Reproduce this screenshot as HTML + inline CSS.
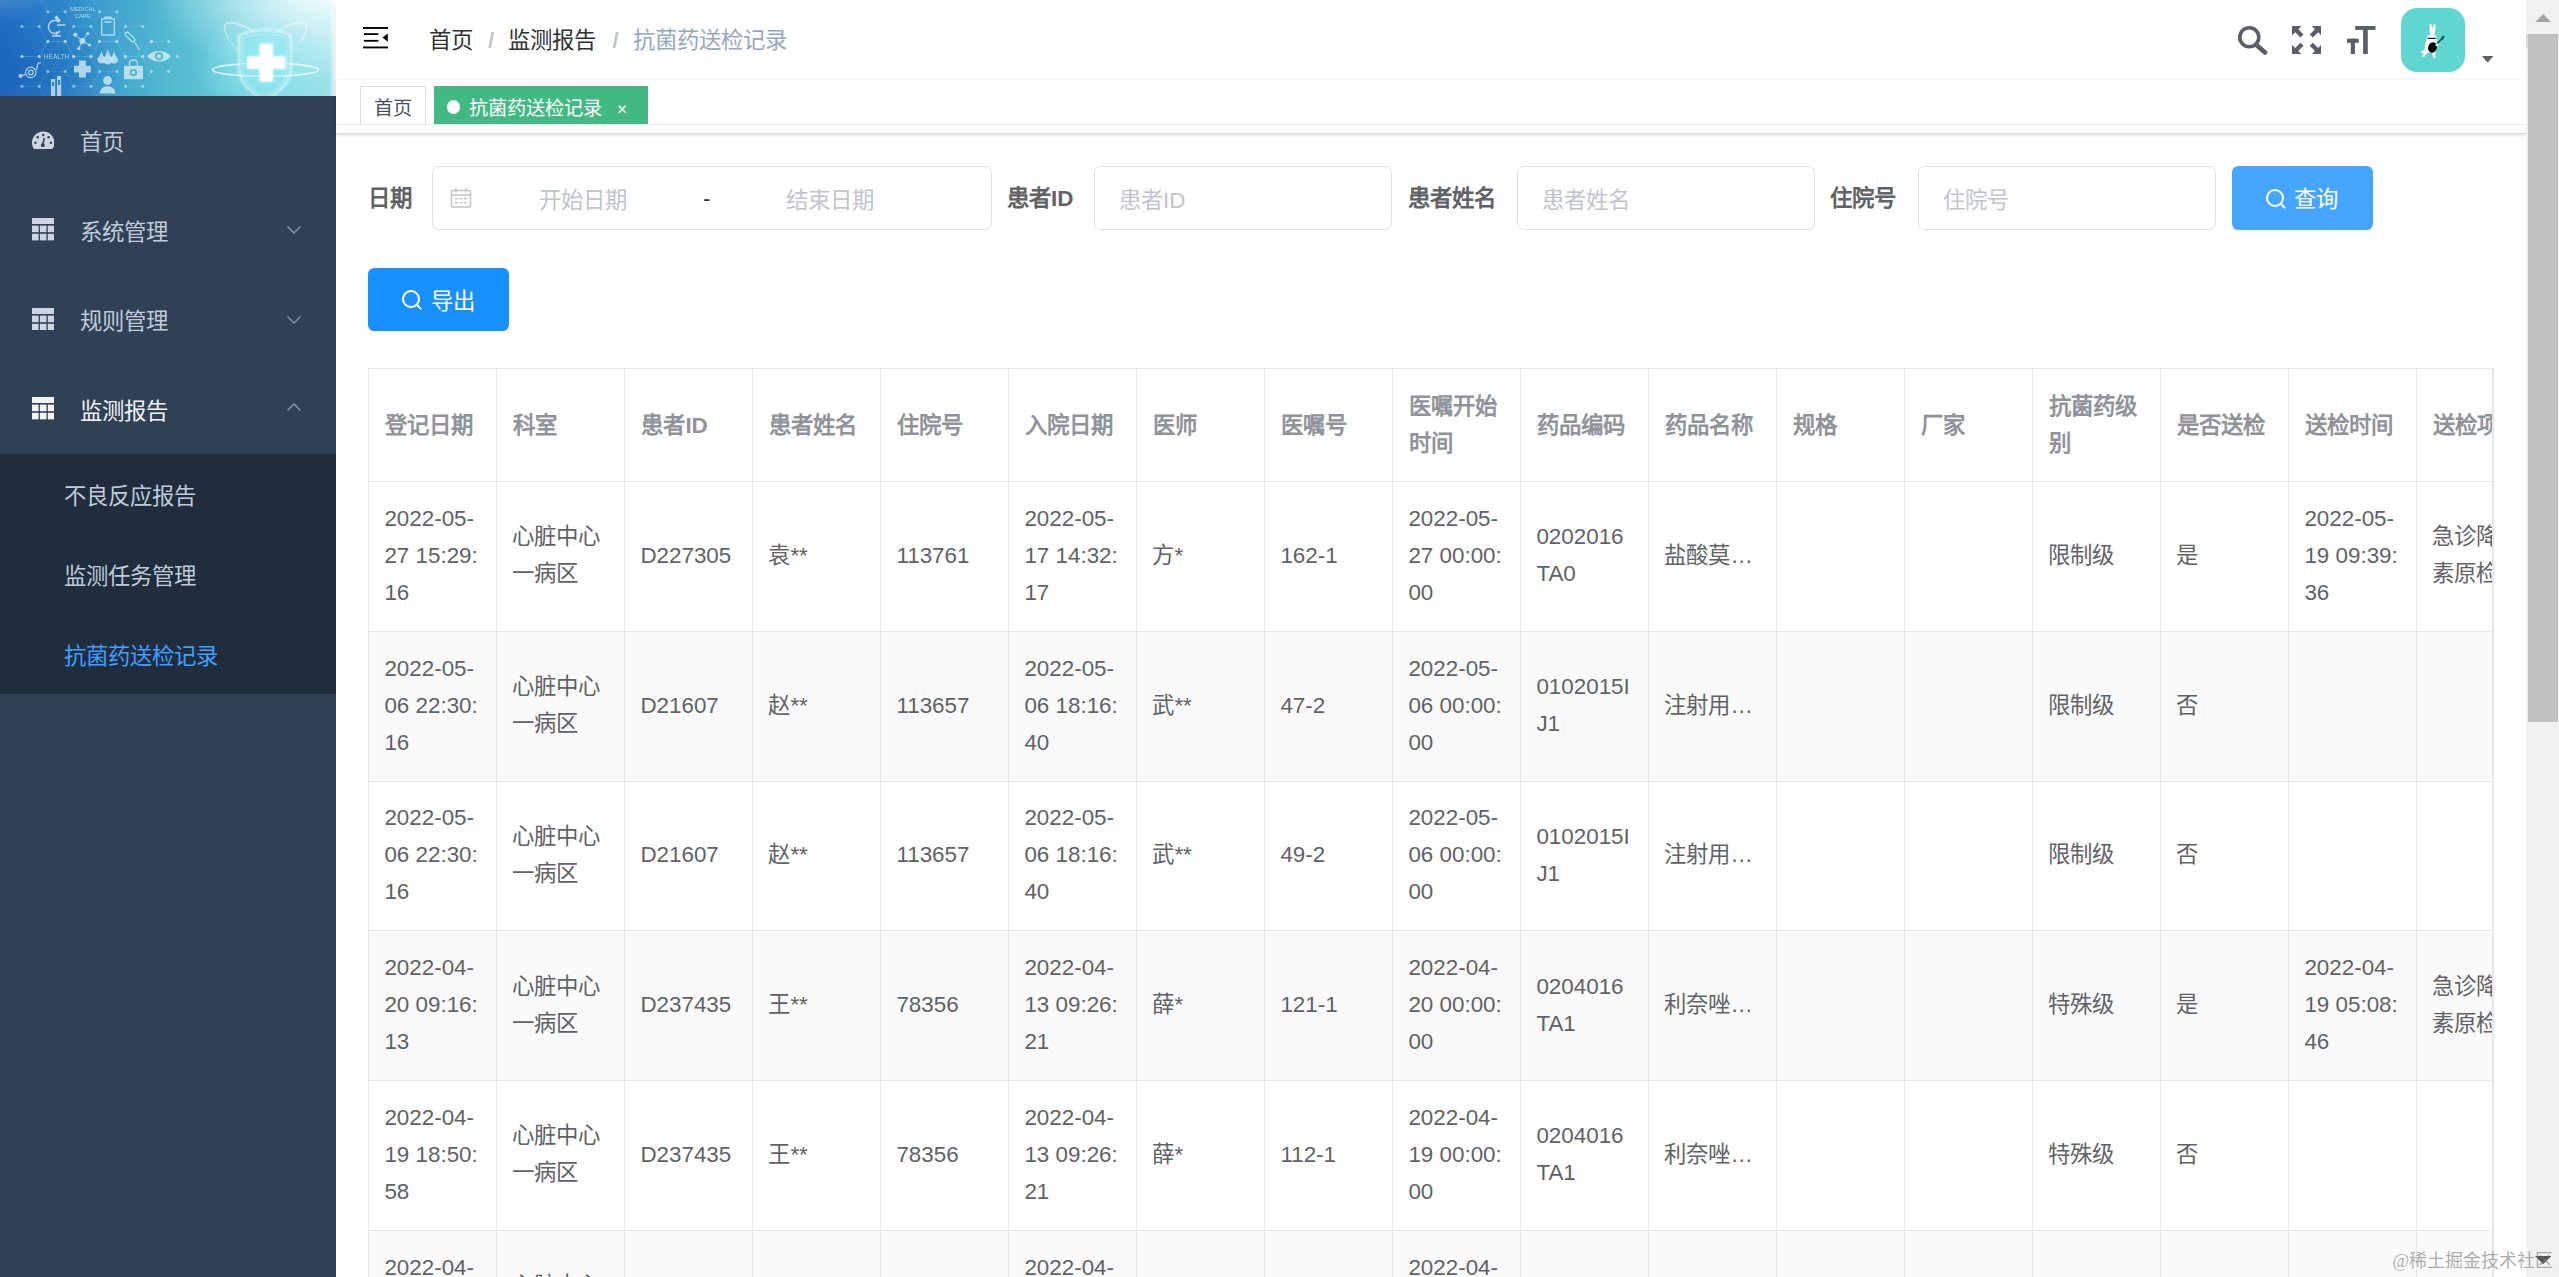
<!DOCTYPE html>
<html lang="zh-CN">
<head>
<meta charset="utf-8">
<title>抗菌药送检记录</title>
<style>
*{box-sizing:border-box;margin:0;padding:0}
html,body{width:2559px;height:1277px;overflow:hidden;background:#fff}
body{position:relative;font-family:"Liberation Sans",sans-serif;font-size:22.4px;color:#606266;-webkit-font-smoothing:antialiased}
.abs{position:absolute}

/* ---------- sidebar ---------- */
#sidebar{position:absolute;left:0;top:0;width:336px;height:1277px;background:#304156;overflow:hidden}
#logo{position:absolute;left:0;top:0;width:336px;height:96px;overflow:hidden;
 background:linear-gradient(90deg,#1e6cc2 0%,#2b86c9 18%,#3fa3cf 33%,#52b9d0 50%,#62c6d6 66%,#7dd5e0 82%,#9fe2ea 100%)}
.mi{position:absolute;left:0;width:336px;height:89.6px;line-height:89.6px;color:#bfcbd9;font-size:22.4px;white-space:nowrap}
.mi .txt{position:absolute;left:80px;top:2px}
.mi svg.ic{position:absolute;left:32px;top:32.700px;width:22.4px;height:22.4px}
.mi svg.ar{position:absolute;left:286px;top:39.600px;width:16px;height:10px}
#sub{position:absolute;left:0;top:454.4px;width:336px;height:240px;background:#1f2d3d}
.si{position:absolute;left:64px;margin-top:2.500px;height:80px;line-height:80px;color:#bfcbd9;font-size:22.4px;white-space:nowrap}

/* ---------- navbar ---------- */
#navbar{position:absolute;left:336px;top:0;width:2190px;height:80px;background:#fff;box-shadow:0 1.6px 6.4px rgba(0,21,41,.08)}
.bc{position:absolute;top:1px;height:80px;line-height:80px;font-size:22.4px;white-space:nowrap;color:#303133}
.bc.sep{color:#c0c4cc;font-weight:700}
.bc.last{color:#97a8be}

/* ---------- tags ---------- */
#tags{position:absolute;left:336px;top:80px;width:2190px;height:54.4px;background:#fff;border-bottom:1.6px solid #d9dadd;box-shadow:0 1.6px 4.8px 0 rgba(0,0,0,.12),0 0 4.8px 0 rgba(0,0,0,.04)}
.tag{position:absolute;top:6.4px;height:41.6px;line-height:38.4px;font-size:19.2px;border:1.6px solid #d8dce5;color:#495060;background:#fff;white-space:nowrap}
.tag.on{background:#42b983;border-color:#42b983;color:#fff}

/* ---------- form ---------- */
.lbl{position:absolute;top:167px;height:64px;line-height:64px;font-size:22.4px;font-weight:700;color:#606266;white-space:nowrap}
.inp{position:absolute;top:166.4px;height:64px;border:1.6px solid #dcdfe6;border-radius:6.4px;background:#fff;line-height:60.8px;font-size:22.4px;color:#c0c4cc;white-space:nowrap}
.inp span{position:absolute;top:3.900px}
.btn{position:absolute;height:64px;border-radius:6.4px;color:#fff;font-size:22.4px;line-height:64px;white-space:nowrap}

/* ---------- table ---------- */
#tw{position:absolute;left:368px;top:368px;width:2126px;height:920px;overflow:hidden;border-left:1.6px solid #e2e8ee;border-top:1.6px solid #e2e8ee}
#tw:after{content:"";position:absolute;right:0;top:0;width:1.6px;height:100%;background:#e2e8ee}
table{border-collapse:separate;border-spacing:0;table-layout:fixed;width:2304px}
th,td{width:128px;border-right:1.6px solid #e2e8ee;border-bottom:1.6px solid #e2e8ee;padding:0 0 0 15.4px;text-align:left;vertical-align:middle;font-size:22.4px;line-height:37px;white-space:nowrap;overflow:hidden}
th{height:113px;color:#909399;font-weight:700;background:#fff;padding-left:16.400px;padding-top:0}
td{height:149.750px;color:#606266;font-weight:400;background:#fff;padding-bottom:2.200px}
tr.s td{background:#fafafa}

/* ---------- scrollbar ---------- */
#sb{position:absolute;left:2526px;top:0;width:33px;height:1277px;background:#f1f1f1}
#sb .th{position:absolute;left:2px;top:34px;width:30px;height:687.700px;background:#c1c1c1}
</style>
</head>
<body>

<div id="sidebar">
  <div id="logo"><svg class="abs" style="left:0;top:0;width:336px;height:96px" viewBox="0 0 336 96">
<defs><radialGradient id="g1" cx="0" cy="0" r="1"><stop offset="0" stop-color="#fff" stop-opacity=".55"/><stop offset="1" stop-color="#fff" stop-opacity="0"/></radialGradient><radialGradient id="g2" cx=".5" cy=".5" r=".5"><stop offset="0" stop-color="#fff" stop-opacity=".95"/><stop offset=".45" stop-color="#e9fbfd" stop-opacity=".6"/><stop offset="1" stop-color="#dff8fb" stop-opacity="0"/></radialGradient><radialGradient id="g3" cx=".5" cy=".5" r=".5"><stop offset="0" stop-color="#9ff0f5" stop-opacity=".75"/><stop offset="1" stop-color="#9ff0f5" stop-opacity="0"/></radialGradient><radialGradient id="g4" cx=".5" cy=".5" r=".5"><stop offset="0" stop-color="#1a5fb6" stop-opacity=".6"/><stop offset=".6" stop-color="#1a5fb6" stop-opacity=".25"/><stop offset="1" stop-color="#1a5fb6" stop-opacity="0"/></radialGradient><linearGradient id="g6" gradientUnits="userSpaceOnUse" x1="0" y1="18" x2="0" y2="58"><stop offset="0" stop-color="#fff" stop-opacity=".75"/><stop offset=".55" stop-color="#fff" stop-opacity=".45"/><stop offset="1" stop-color="#fff" stop-opacity="0"/></linearGradient><linearGradient id="g5" x1="0" y1="0" x2="1" y2="0"><stop offset="0" stop-color="#fff" stop-opacity="0"/><stop offset="1" stop-color="#fff" stop-opacity=".9"/></linearGradient><filter id="bl" x="-20%" y="-20%" width="140%" height="140%"><feGaussianBlur stdDeviation="1.100"/></filter><filter id="bl3" x="-5%" y="-5%" width="110%" height="110%"><feGaussianBlur stdDeviation=".45"/></filter><filter id="bl4" x="-20%" y="-20%" width="140%" height="140%"><feGaussianBlur stdDeviation=".8"/></filter><filter id="bl2" x="-20%" y="-20%" width="140%" height="140%"><feGaussianBlur stdDeviation=".5"/></filter></defs>
<ellipse cx="0" cy="75" rx="130" ry="70" fill="url(#g4)"/>
<ellipse cx="0" cy="0" rx="75" ry="34" fill="url(#g1)"/>
<ellipse cx="326" cy="-10" rx="175" ry="92" fill="url(#g2)"/>
<ellipse cx="264" cy="66" rx="70" ry="52" fill="url(#g3)"/>
<g filter="url(#bl3)" opacity=".8">
<g stroke="#d8f0ff" stroke-opacity=".16" stroke-width=".8" fill="none">
<path d="M21.9 -3.2L39.2 -3.2"/>
<path d="M21.9 26.6L39.2 26.6"/>
<path d="M21.9 56.4L39.2 56.4"/>
<path d="M21.9 56.5L39.2 56.5"/>
<path d="M21.9 86.3L39.2 86.3"/>
<path d="M21.9 116.1L39.2 116.1"/>
<path d="M39.2 -3.2L47.8 11.7"/>
<path d="M39.2 26.6L47.8 11.7"/>
<path d="M39.2 26.6L47.8 41.5"/>
<path d="M39.2 56.4L47.8 41.5"/>
<path d="M39.2 56.5L47.8 41.6"/>
<path d="M39.2 56.5L47.8 71.4"/>
<path d="M39.2 86.3L47.8 71.4"/>
<path d="M39.2 86.3L47.8 101.2"/>
<path d="M39.2 116.1L47.8 101.2"/>
<path d="M47.8 11.7L65.1 11.7"/>
<path d="M47.8 41.5L65.1 41.5"/>
<path d="M47.8 41.6L65.1 41.6"/>
<path d="M47.8 71.4L65.1 71.4"/>
<path d="M47.8 101.2L65.1 101.2"/>
<path d="M65.1 11.7L73.7 -3.2"/>
<path d="M65.1 11.7L73.7 26.6"/>
<path d="M65.1 41.5L73.7 26.6"/>
<path d="M65.1 41.5L73.7 56.4"/>
<path d="M65.1 41.6L73.7 56.5"/>
<path d="M65.1 71.4L73.7 56.5"/>
<path d="M65.1 71.4L73.7 86.3"/>
<path d="M65.1 101.2L73.7 86.3"/>
<path d="M65.1 101.2L73.7 116.1"/>
<path d="M73.7 -3.2L91.0 -3.2"/>
<path d="M73.7 26.6L91.0 26.6"/>
<path d="M73.7 56.4L91.0 56.4"/>
<path d="M73.7 56.5L91.0 56.5"/>
<path d="M73.7 86.3L91.0 86.3"/>
<path d="M73.7 116.1L91.0 116.1"/>
<path d="M91.0 -3.2L99.6 11.7"/>
<path d="M91.0 26.6L99.6 11.7"/>
<path d="M91.0 26.6L99.6 41.5"/>
<path d="M91.0 56.4L99.6 41.5"/>
<path d="M91.0 56.5L99.6 41.6"/>
<path d="M91.0 56.5L99.6 71.4"/>
<path d="M91.0 86.3L99.6 71.4"/>
<path d="M91.0 86.3L99.6 101.2"/>
<path d="M91.0 116.1L99.6 101.2"/>
<path d="M99.6 11.7L116.9 11.7"/>
<path d="M99.6 41.5L116.9 41.5"/>
<path d="M99.6 41.6L116.9 41.6"/>
<path d="M99.6 71.4L116.9 71.4"/>
<path d="M99.6 101.2L116.9 101.2"/>
<path d="M116.9 11.7L125.5 26.6"/>
<path d="M116.9 41.5L125.5 26.6"/>
<path d="M116.9 41.5L125.5 56.4"/>
<path d="M116.9 41.6L125.5 56.5"/>
<path d="M116.9 71.4L125.5 56.5"/>
<path d="M116.9 71.4L125.5 86.3"/>
<path d="M116.9 101.2L125.5 86.3"/>
<path d="M125.5 26.6L142.8 26.6"/>
<path d="M125.5 56.4L142.8 56.4"/>
<path d="M125.5 56.5L142.8 56.5"/>
<path d="M125.5 86.3L142.8 86.3"/>
<path d="M142.8 26.6L151.4 41.5"/>
<path d="M142.8 56.4L151.4 41.5"/>
<path d="M142.8 56.5L151.4 41.6"/>
<path d="M142.8 56.5L151.4 71.4"/>
<path d="M142.8 86.3L151.4 71.4"/>
<path d="M151.4 41.6L168.7 41.6"/>
<path d="M151.4 71.4L168.7 71.4"/>
<path d="M168.7 41.6L177.3 56.5"/>
<path d="M168.7 71.4L177.3 56.5"/>
</g>
<g fill="#dff3ff" fill-opacity=".7">
<circle cx="21.9" cy="-3.2" r="1.500"/>
<circle cx="21.9" cy="26.6" r="1.500"/>
<circle cx="21.9" cy="56.4" r="1.500"/>
<circle cx="21.9" cy="56.5" r="1.500"/>
<circle cx="21.9" cy="86.3" r="1.500"/>
<circle cx="39.2" cy="-3.2" r="1.500"/>
<circle cx="39.2" cy="26.6" r="1.500"/>
<circle cx="39.2" cy="56.4" r="1.500"/>
<circle cx="39.2" cy="56.5" r="1.500"/>
<circle cx="39.2" cy="86.3" r="1.500"/>
<circle cx="47.8" cy="11.7" r="1.500"/>
<circle cx="47.8" cy="41.5" r="1.500"/>
<circle cx="47.8" cy="41.6" r="1.500"/>
<circle cx="47.8" cy="71.4" r="1.500"/>
<circle cx="65.1" cy="11.7" r="1.500"/>
<circle cx="65.1" cy="41.5" r="1.500"/>
<circle cx="65.1" cy="41.6" r="1.500"/>
<circle cx="65.1" cy="71.4" r="1.500"/>
<circle cx="73.7" cy="-3.2" r="1.500"/>
<circle cx="73.7" cy="26.6" r="1.500"/>
<circle cx="73.7" cy="56.4" r="1.500"/>
<circle cx="73.7" cy="56.5" r="1.500"/>
<circle cx="73.7" cy="86.3" r="1.500"/>
<circle cx="91.0" cy="-3.2" r="1.500"/>
<circle cx="91.0" cy="26.6" r="1.500"/>
<circle cx="91.0" cy="56.4" r="1.500"/>
<circle cx="91.0" cy="56.5" r="1.500"/>
<circle cx="91.0" cy="86.3" r="1.500"/>
<circle cx="99.6" cy="11.7" r="1.500"/>
<circle cx="99.6" cy="41.5" r="1.500"/>
<circle cx="99.6" cy="41.6" r="1.500"/>
<circle cx="99.6" cy="71.4" r="1.500"/>
<circle cx="116.9" cy="11.7" r="1.500"/>
<circle cx="116.9" cy="41.5" r="1.500"/>
<circle cx="116.9" cy="41.6" r="1.500"/>
<circle cx="116.9" cy="71.4" r="1.500"/>
<circle cx="125.5" cy="26.6" r="1.500"/>
<circle cx="125.5" cy="56.4" r="1.500"/>
<circle cx="125.5" cy="56.5" r="1.500"/>
<circle cx="125.5" cy="86.3" r="1.500"/>
<circle cx="142.8" cy="26.6" r="1.500"/>
<circle cx="142.8" cy="56.4" r="1.500"/>
<circle cx="142.8" cy="56.5" r="1.500"/>
<circle cx="142.8" cy="86.3" r="1.500"/>
<circle cx="151.4" cy="41.5" r="1.500"/>
<circle cx="151.4" cy="41.6" r="1.500"/>
<circle cx="151.4" cy="71.4" r="1.500"/>
<circle cx="168.7" cy="41.6" r="1.500"/>
<circle cx="168.7" cy="71.4" r="1.500"/>
<circle cx="177.3" cy="56.5" r="1.500"/>
</g>
<g fill="none" stroke="#e8f6fb" stroke-opacity=".9" stroke-width="1.500"><path d="M59 22a6.500 6.500 0 1 0 1 9"/><path d="M52 36h9M56.500 31.500v4.500"/><path d="M55.500 16.500l4.200 5" stroke-width="3"/><path d="M57 25h8.500"/></g>
<g fill="#e8f6fb" fill-opacity=".8" font-family="Liberation Sans,sans-serif" font-size="5.800" text-anchor="middle"><text x="82.800" y="10.600">MEDICAL</text><text x="82.800" y="17.600">CARE</text><text x="56.500" y="58.800" font-size="6.600">HEALTH</text></g>
<g fill="none" stroke="#e8f6fb" stroke-opacity=".9" stroke-width="1.300"><rect x="101.700" y="18.800" width="12.600" height="16.200"/><path d="M105 18.800v-1.600h6v1.600M104.500 22h7"/></g>
<g fill="none" stroke="#e8f6fb" stroke-opacity=".9" stroke-width="1"><path d="M82.300 41l-7-6.300M82.300 41l5.500-7.500M82.300 41l7 4M82.300 41l-3.500 7.500"/></g><g fill="#e8f6fb" fill-opacity=".88"><circle cx="82.300" cy="41" r="3"/><circle cx="75.300" cy="34.700" r="2"/><circle cx="87.800" cy="33.500" r="1.600"/><circle cx="89.500" cy="45" r="1.600"/><circle cx="78.800" cy="48.600" r="1.600"/></g>
<g fill="#e8f6fb" fill-opacity=".88"><path d="M101.5 50.5C102.34 56.35 105.7 58.3 105.7 59.3A4.2 4.2 0 0 1 97.3 59.3C97.3 58.3 100.66 56.35 101.5 50.5z"/><path d="M107.8 48.5C108.8 55.7 112.8 58.1 112.8 59.5A5 5 0 0 1 102.8 59.5C102.8 58.1 106.8 55.7 107.8 48.5z"/><path d="M114 50.5C114.84 56.35 118.2 58.3 118.2 59.3A4.2 4.2 0 0 1 109.8 59.3C109.8 58.3 113.16 56.35 114 50.5z"/></g>
<path fill="#e8f6fb" fill-opacity=".88" d="M79 60.500h6.800v5.200h5v6.700h-5v5.200H79v-5.200h-5v-6.700h5z"/>
<g fill="none" stroke="#e8f6fb" stroke-opacity=".9" stroke-width="1.200"><circle cx="30.800" cy="72.400" r="5.200"/><circle cx="30.800" cy="72.400" r="2.300"/><path d="M36.500 70l1.500-7h3M25.500 74l-4 2"/></g><circle fill="#e8f6fb" fill-opacity=".88" cx="20.500" cy="76" r="2"/>
<g fill="#e8f6fb" fill-opacity=".88"><rect x="51" y="79" width="4.200" height="17"/><rect x="57" y="76" width="4.200" height="20"/></g><g fill="#2a86c8"><rect x="52" y="82" width="2.200" height="4"/><rect x="58" y="80" width="2.200" height="5"/></g>
<g fill="#e8f6fb" fill-opacity=".88"><circle cx="107.500" cy="80.500" r="4.400"/><path d="M99.800 93.500c0-5 3.500-7.300 7.700-7.300s7.700 2.300 7.700 7.300z"/></g>
<g fill="#e8f6fb" fill-opacity=".88"><rect x="124" y="65.800" width="19" height="13.400" rx="1"/></g><path fill="none" stroke="#e8f6fb" stroke-opacity=".9" stroke-width="1.300" d="M129.500 65.500v-2.500a4 3 0 0 1 8 0v2.500"/><circle cx="133.500" cy="72.500" r="3.600" fill="#4fb2d0"/><circle cx="133.500" cy="72.500" r="1.800" fill="#e8f6fb"/>
<g fill="none" stroke="#e8f6fb" stroke-opacity=".9" stroke-width="1.200" stroke-opacity=".6"><rect x="-6" y="-2" width="12" height="4" rx="2" transform="translate(130 37) rotate(45)"/><path d="M134.500 42l5 8"/></g>
<g fill="#e8f6fb" fill-opacity=".88" fill-opacity=".55"><path d="M147 56.300c6-7 18-7 24 0-6 7-18 7-24 0z"/></g><circle cx="159" cy="56.300" r="4.300" fill="#5fbfd3"/><circle cx="159" cy="56.300" r="2" fill="#e8f6fb" fill-opacity=".8"/>
</g>
<g fill="none" stroke="#fff" stroke-opacity=".8" filter="url(#bl2)"><ellipse cx="265.500" cy="69.700" rx="53" ry="6.500" stroke-width="1.700" stroke-opacity=".7"/><path d="M239.600 51.700C225.500 39.200 222.400 26.600 226.300 23.500 231.800 21.100 244.300 25.100 253.700 31.300" stroke="url(#g6)" stroke-width="1.500"/><path d="M291.400 51.700C305.500 39.200 308.600 26.600 304.700 23.500 299.200 21.100 286.700 25.100 277.300 31.300" stroke="url(#g6)" stroke-width="1.400" stroke-opacity=".85"/></g>
<path d="M265 29.500c-10 .5-19 2.500-26 6v32c0 15 11 25 26 33 15-8 26-18 26-33v-32c-7-3.500-16-5.500-26-6z" fill="#8fe8f0" fill-opacity=".42" stroke="#fff" stroke-opacity=".62" stroke-width="2" filter="url(#bl4)"/>
<path d="M265 33.500c-8 .5-16 2-22 5v29c0 13 9.500 22 22 29 12.500-7 22-16 22-29v-29c-6-3-14-4.500-22-5z" fill="none" stroke="#fff" stroke-opacity=".3" stroke-width="1"/>
<path d="M259.700 43.600h13.300v12.600h12.500v12.900h-12.500v12.600h-13.300v-12.600h-12.600v-12.900h12.600z" fill="#fff" filter="url(#bl)"/>
<path d="M260.700 45h11.300v12.200h12.500v10.900h-12.500v12.600h-11.300v-12.600h-12.600v-10.900h12.600z" fill="#fff"/>
<rect x="329" y="0" width="7" height="96" fill="url(#g5)"/>
</svg></div>

  <div class="mi" style="top:96px">
    <svg class="ic" viewBox="0 0 128 100" style="top:35px;height:18.5px">
      <path fill="#ccd5e0" d="M64 0C28.7 0 0 28.7 0 64c0 11 2.8 21.300 7.700 30.300 1.700 3.400 5.300 5.700 9.300 5.700h94c4 0 7.600-2.300 9.300-5.700 4.900-9 7.700-19.300 7.700-30.300C128 28.700 99.300 0 64 0z"/>
      <g fill="#304156"><circle cx="64" cy="20" r="7"/><circle cx="33" cy="33" r="7"/><circle cx="95" cy="33" r="7"/><circle cx="20" cy="64" r="7"/><circle cx="108" cy="64" r="7"/><circle cx="62" cy="78" r="11"/><path d="M66 36l8 2-7 36-9-2z"/></g>
    </svg>
    <span class="txt">首页</span>
  </div>

  <div class="mi" style="top:185.6px">
    <svg class="ic" viewBox="0 0 22.400 22.400"><g fill="#ccd5e0"><rect x="0" y="0" width="22.400" height="6"/><rect x="0" y="7.600" width="6.600" height="6.600"/><rect x="7.900" y="7.600" width="6.600" height="6.600"/><rect x="15.800" y="7.600" width="6.600" height="6.600"/><rect x="0" y="15.800" width="6.600" height="6.600"/><rect x="7.900" y="15.800" width="6.600" height="6.600"/><rect x="15.800" y="15.800" width="6.600" height="6.600"/></g></svg>
    <span class="txt">系统管理</span>
    <svg class="ar" viewBox="0 0 16 10"><path d="M1.500 1.500L8 8l6.500-6.500" fill="none" stroke="#8b97a6" stroke-width="1.300"/></svg>
  </div>

  <div class="mi" style="top:275.2px">
    <svg class="ic" viewBox="0 0 22.400 22.400"><g fill="#ccd5e0"><rect x="0" y="0" width="22.400" height="6"/><rect x="0" y="7.600" width="6.600" height="6.600"/><rect x="7.900" y="7.600" width="6.600" height="6.600"/><rect x="15.800" y="7.600" width="6.600" height="6.600"/><rect x="0" y="15.800" width="6.600" height="6.600"/><rect x="7.900" y="15.800" width="6.600" height="6.600"/><rect x="15.800" y="15.800" width="6.600" height="6.600"/></g></svg>
    <span class="txt">规则管理</span>
    <svg class="ar" viewBox="0 0 16 10"><path d="M1.500 1.500L8 8l6.500-6.500" fill="none" stroke="#8b97a6" stroke-width="1.300"/></svg>
  </div>

  <div class="mi" style="top:364.8px;color:#f4f4f5">
    <svg class="ic" viewBox="0 0 22.400 22.400"><g fill="#f4f4f5"><rect x="0" y="0" width="22.400" height="6"/><rect x="0" y="7.600" width="6.600" height="6.600"/><rect x="7.900" y="7.600" width="6.600" height="6.600"/><rect x="15.800" y="7.600" width="6.600" height="6.600"/><rect x="0" y="15.800" width="6.600" height="6.600"/><rect x="7.900" y="15.800" width="6.600" height="6.600"/><rect x="15.800" y="15.800" width="6.600" height="6.600"/></g></svg>
    <span class="txt">监测报告</span>
    <svg class="ar" viewBox="0 0 16 10" style="top:37.200px"><path d="M1.500 8.500L8 2l6.500 6.500" fill="none" stroke="#8b97a6" stroke-width="1.300"/></svg>
  </div>

  <div id="sub">
    <div class="si" style="top:0">不良反应报告</div>
    <div class="si" style="top:80px">监测任务管理</div>
    <div class="si" style="top:160px;color:#409eff">抗菌药送检记录</div>
  </div>
</div>

<div id="navbar">
  <!-- hamburger -->
  <svg class="abs" style="left:27.400px;top:27.300px;width:25px;height:21.400px" viewBox="0 0 25 21.400">
    <g fill="#000"><rect x="0" y="0" width="25" height="1.900"/><rect x=".9" y="6.200" width="14.500" height="1.800"/><rect x=".9" y="12.900" width="14.500" height="1.800"/><rect x="0" y="19.500" width="25" height="1.900"/><path d="M24.800 6.500v8.200l-5.300-4.100z"/></g>
  </svg>
  <span class="bc" style="left:92.800px">首页</span>
  <span class="bc sep" style="left:152px">/</span>
  <span class="bc" style="left:171.800px">监测报告</span>
  <span class="bc sep" style="left:276.500px">/</span>
  <span class="bc last" style="left:297px">抗菌药送检记录</span>

  <!-- search -->
  <svg class="abs" style="left:1901px;top:25px;width:31px;height:31px" viewBox="0 0 31 31">
    <circle cx="12.300" cy="12.300" r="9.500" fill="none" stroke="#5a5e66" stroke-width="3.600"/>
    <path d="M19.500 20L28 27.500" stroke="#5a5e66" stroke-width="4.600" stroke-linecap="round"/>
  </svg>
  <!-- fullscreen -->
  <svg class="abs" style="left:1955.700px;top:26px;width:29.300px;height:28.200px" viewBox="0 0 29.300 28.200">
    <g fill="#5a5e66">
      <path d="M0 0h9.500L6.300 3.200l5.200 5.200-3.100 3.100-5.200-5.200L0 9.500z"/>
      <path d="M29.300 0v9.500l-3.200-3.200-5.200 5.200-3.100-3.100 5.200-5.200L19.800 0z"/>
      <path d="M0 28.200v-9.500l3.200 3.200 5.200-5.200 3.100 3.100-5.200 5.200 3.200 3.200z"/>
      <path d="M29.300 28.200h-9.500l3.200-3.200-5.200-5.200 3.100-3.100 5.200 5.200 3.200-3.200z"/>
    </g>
  </svg>
  <!-- size -->
  <svg class="abs" style="left:2011.200px;top:26px;width:28.500px;height:28.200px" viewBox="0 0 28.500 28.200">
    <g fill="#5a5e66"><rect x="8.200" y="0" width="20.300" height="3.900"/><rect x="16.100" y="0" width="4.700" height="28.200"/><rect x="0" y="12.700" width="11.700" height="4.100"/><rect x="3.800" y="12.700" width="4.100" height="15.500"/></g>
  </svg>
  <!-- avatar -->
  <div class="abs" style="left:2065px;top:8px;width:64px;height:64px;border-radius:16px;background:#5fd6d0;overflow:hidden">
    <svg class="abs" style="left:0;top:0;width:64px;height:64px" viewBox="0 0 64 64">
      <g fill="#fff">
        <ellipse cx="30" cy="21.500" rx="1.500" ry="6" transform="rotate(-6 30 21.500)"/>
        <ellipse cx="32.800" cy="21.800" rx="1.500" ry="5.800" transform="rotate(8 32.800 21.800)"/>
        <path d="M27 27.500c2.500-2 6.500-2 8 .5 1.200 3.500 1 9 0 13.500l-1 6.500 1.300 1.800-2.800.3-1.500-5.600-5 .5-2.800 4-2.200-.6 1.800-3.600-3 .3.800-2 2.800-1.200c.8-5.500 1.600-11 3.600-14.400z"/>
      </g>
      <ellipse cx="31.500" cy="39.500" rx="4.400" ry="5.400" fill="#0a0a0a" transform="rotate(20 31.500 39.500)"/>
      <path d="M35 36.500l5.500-5.200" stroke="#0d3b40" stroke-width="1.300" stroke-linecap="round"/><ellipse cx="41.600" cy="30" rx="2.600" ry="1.250" fill="#0b4a50" transform="rotate(-48 41.600 30)"/><circle cx="36" cy="36.800" r="1.500" fill="#fff"/>
      <path d="M26.500 30.400h8.300" stroke="#222" stroke-width="1.400"/>
    </svg>
  </div>
  <svg class="abs" style="left:2146px;top:55.600px;width:11.200px;height:6.800px" viewBox="0 0 11.200 6.800"><path d="M0 0h11.200L5.600 6.800z" fill="#5a5e66"/></svg>
</div>

<div id="tags">
  <div class="abs" style="left:0;top:0;width:2190px;height:44.600px;overflow:hidden;border-bottom:1.200px solid #ebebeb">
    <div class="tag" style="left:24.200px;width:65.600px"><span class="abs" style="left:12.600px;top:2.800px">首页</span></div>
    <div class="tag on" style="left:98px;width:214px">
      <span class="abs" style="left:12px;top:12.800px;width:13.400px;height:13.400px;border-radius:50%;background:#fff"></span>
      <span class="abs" style="left:33.800px;top:2.800px">抗菌药送检记录</span>
      <svg class="abs" style="left:182.500px;top:17.200px;width:8.400px;height:8.400px" viewBox="0 0 8.400 8.400"><path d="M.6.600l7.200 7.200M7.800.600L.6 7.800" stroke="#fff" stroke-width="1.500"/></svg>
    </div>
  </div>
</div>

<div id="main">
<div class="lbl" style="left:368px">日期</div>
<div class="inp" style="left:432.300px;width:560px">
  <svg class="abs" style="left:17px;top:20px;width:22px;height:22px" viewBox="0 0 22 22"><g fill="none" stroke="#c0c4cc" stroke-width="1.500"><rect x="1.500" y="3.500" width="19" height="16.500" rx="1"/><path d="M1.500 8h19M6 1v4.500M16 1v4.500"/></g><g fill="#c0c4cc"><rect x="5" y="11" width="3" height="1.400"/><rect x="9.500" y="11" width="3" height="1.400"/><rect x="14" y="11" width="3" height="1.400"/><rect x="5" y="15" width="3" height="1.400"/><rect x="9.500" y="15" width="3" height="1.400"/><rect x="14" y="15" width="3" height="1.400"/></g></svg>
  <span style="left:105.300px">开始日期</span>
  <span style="left:269.800px;top:1.200px;color:#303133">-</span>
  <span style="left:352.500px">结束日期</span>
</div>
<div class="lbl" style="left:1007px">患者ID</div>
<div class="inp" style="left:1094px;width:297.500px"><span style="left:24px">患者ID</span></div>
<div class="lbl" style="left:1408px">患者姓名</div>
<div class="inp" style="left:1517px;width:297.500px"><span style="left:24px">患者姓名</span></div>
<div class="lbl" style="left:1830px">住院号</div>
<div class="inp" style="left:1918px;width:297.500px"><span style="left:24px">住院号</span></div>
<div class="btn" style="left:2232px;top:166.400px;width:140.500px;background:#46a6ff"><svg class="abs" style="left:33.5px;top:22.8px;width:20px;height:20px" viewBox="0 0 20 20"><circle cx="9" cy="9" r="8" fill="none" stroke="#fff" stroke-width="2"/><path d="M14.800 14.800L18.600 18.600" stroke="#fff" stroke-width="2" stroke-linecap="round"/></svg><span class="abs" style="left:62px;top:2px">查询</span></div>
<div class="btn" style="left:368px;top:267.800px;width:141px;height:63.200px;line-height:63.200px;background:#1890ff"><svg class="abs" style="left:34px;top:22.6px;width:20px;height:20px" viewBox="0 0 20 20"><circle cx="9" cy="9" r="8" fill="none" stroke="#fff" stroke-width="2"/><path d="M14.800 14.800L18.600 18.600" stroke="#fff" stroke-width="2" stroke-linecap="round"/></svg><span class="abs" style="left:62.500px;top:2px">导出</span></div>
<div id="tw"><table>
<tr><th>登记日期</th><th>科室</th><th>患者ID</th><th>患者姓名</th><th>住院号</th><th>入院日期</th><th>医师</th><th>医嘱号</th><th>医嘱开始<br>时间</th><th>药品编码</th><th>药品名称</th><th>规格</th><th>厂家</th><th>抗菌药级<br>别</th><th>是否送检</th><th>送检时间</th><th>送检项目</th><th>送检结果</th></tr>
<tr><td>2022-05-<br>27 15:29:<br>16</td><td>心脏中心<br>一病区</td><td>D227305</td><td>袁**</td><td>113761</td><td>2022-05-<br>17 14:32:<br>17</td><td>方*</td><td>162-1</td><td>2022-05-<br>27 00:00:<br>00</td><td>0202016<br>TA0</td><td>盐酸莫…</td><td></td><td></td><td>限制级</td><td>是</td><td>2022-05-<br>19 09:39:<br>36</td><td>急诊降钙<br>素原检测</td><td></td></tr>
<tr class="s"><td>2022-05-<br>06 22:30:<br>16</td><td>心脏中心<br>一病区</td><td>D21607</td><td>赵**</td><td>113657</td><td>2022-05-<br>06 18:16:<br>40</td><td>武**</td><td>47-2</td><td>2022-05-<br>06 00:00:<br>00</td><td>0102015I<br>J1</td><td>注射用…</td><td></td><td></td><td>限制级</td><td>否</td><td></td><td></td><td></td></tr>
<tr><td>2022-05-<br>06 22:30:<br>16</td><td>心脏中心<br>一病区</td><td>D21607</td><td>赵**</td><td>113657</td><td>2022-05-<br>06 18:16:<br>40</td><td>武**</td><td>49-2</td><td>2022-05-<br>06 00:00:<br>00</td><td>0102015I<br>J1</td><td>注射用…</td><td></td><td></td><td>限制级</td><td>否</td><td></td><td></td><td></td></tr>
<tr class="s"><td>2022-04-<br>20 09:16:<br>13</td><td>心脏中心<br>一病区</td><td>D237435</td><td>王**</td><td>78356</td><td>2022-04-<br>13 09:26:<br>21</td><td>薛*</td><td>121-1</td><td>2022-04-<br>20 00:00:<br>00</td><td>0204016<br>TA1</td><td>利奈唑…</td><td></td><td></td><td>特殊级</td><td>是</td><td>2022-04-<br>19 05:08:<br>46</td><td>急诊降钙<br>素原检测</td><td></td></tr>
<tr><td>2022-04-<br>19 18:50:<br>58</td><td>心脏中心<br>一病区</td><td>D237435</td><td>王**</td><td>78356</td><td>2022-04-<br>13 09:26:<br>21</td><td>薛*</td><td>112-1</td><td>2022-04-<br>19 00:00:<br>00</td><td>0204016<br>TA1</td><td>利奈唑…</td><td></td><td></td><td>特殊级</td><td>否</td><td></td><td></td><td></td></tr>
<tr class="s"><td>2022-04-<br>19 18:50:<br>58</td><td>心脏中心<br>一病区</td><td>D237435</td><td>王**</td><td>78356</td><td>2022-04-<br>13 09:26:<br>21</td><td>薛*</td><td>112-2</td><td>2022-04-<br>19 00:00:<br>00</td><td>0204016<br>TA1</td><td>利奈唑…</td><td></td><td></td><td>特殊级</td><td>否</td><td></td><td></td><td></td></tr>
</table></div>
</div>

<div id="sb"><div class="th"></div>
  <div class="abs" style="left:0;top:34px;width:2px;height:14px;background:#d9d9d9"></div>
  <svg class="abs" style="left:8.800px;top:13.700px;width:16.400px;height:8.300px" viewBox="0 0 16.400 8.300"><path d="M0 8.300L8.200 0l8.200 8.300z" fill="#a3a3a3"/></svg>
  <svg class="abs" style="left:8.800px;top:1256px;width:16.400px;height:8px" viewBox="0 0 16.400 8"><path d="M0 0h16.400L8.200 8z" fill="#505050"/></svg>
</div>
<div class="abs" style="left:2392.500px;top:1247.500px;font-family:'Liberation Serif',serif;font-size:18px;line-height:26px;color:rgba(120,120,120,.6);white-space:nowrap">@稀土掘金技术社区</div>

</body>
</html>
